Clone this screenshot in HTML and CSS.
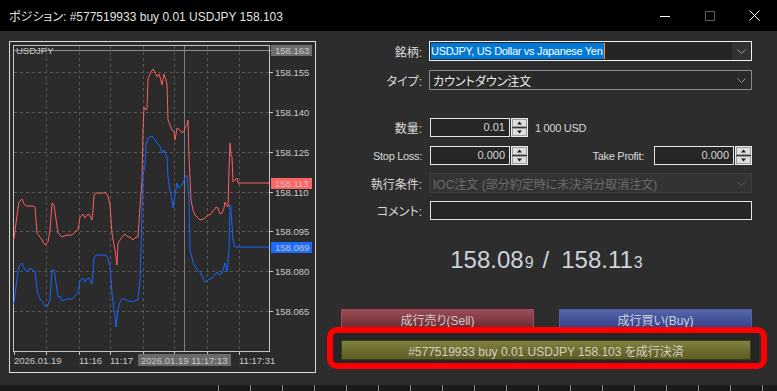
FILE: index.html
```html
<!DOCTYPE html>
<html>
<head>
  <meta charset="utf-8">
  <link rel="stylesheet" href="styles.css">
</head>
<body>

<div class="window">
  <div class="titlebar">
    <span class="title">ポジション: #577519933 buy 0.01 USDJPY 158.103</span>
    <div class="controls">
      <span class="ctl"><svg width="10" height="10" viewBox="0 0 10 10"><line x1="0" y1="5.5" x2="10" y2="5.5" stroke="#fff"/></svg></span>
      <span class="ctl"><svg width="10" height="10" viewBox="0 0 10 10"><rect x="0.5" y="0.5" width="9" height="9" fill="none" stroke="#5a5a5a"/></svg></span>
      <span class="ctl"><svg width="11" height="11" viewBox="0 0 11 11"><path d="M0.5 0.5L10.5 10.5M10.5 0.5L0.5 10.5" stroke="#fff" fill="none"/></svg></span>
    </div>
  </div>

  <div class="main">
    <div class="chart">
      <svg width="307" height="332" viewBox="9 41 307 332">
        <rect x="9.5" y="41.5" width="306" height="331" fill="#2b2b2b" stroke="#dcdcdc"/>

        <!-- grid -->
        <g stroke="#575757" stroke-dasharray="3,3">
          <line x1="14" y1="72.5" x2="269" y2="72.5"/>
          <line x1="14" y1="112.5" x2="269" y2="112.5"/>
          <line x1="14" y1="152.5" x2="269" y2="152.5"/>
          <line x1="14" y1="192.5" x2="269" y2="192.5"/>
          <line x1="14" y1="231.5" x2="269" y2="231.5"/>
          <line x1="14" y1="271.5" x2="269" y2="271.5"/>
          <line x1="14" y1="311.5" x2="269" y2="311.5"/>
          <line x1="46.5" y1="46" x2="46.5" y2="351"/>
          <line x1="79.5" y1="46" x2="79.5" y2="351"/>
          <line x1="110.5" y1="46" x2="110.5" y2="351"/>
          <line x1="143.5" y1="46" x2="143.5" y2="351"/>
          <line x1="174.5" y1="46" x2="174.5" y2="351"/>
          <line x1="207.5" y1="46" x2="207.5" y2="351"/>
          <line x1="239.5" y1="46" x2="239.5" y2="351"/>
        </g>

        <!-- crosshair -->
        <line x1="184.5" y1="46" x2="184.5" y2="351" stroke="#7c7c7c"/>
        <line x1="14" y1="50.5" x2="271" y2="50.5" stroke="#8c8c8c"/>

        <!-- plot frame + ticks -->
        <rect x="13.5" y="45.5" width="256" height="306" fill="none" stroke="#c4c4c4"/>
        <g stroke="#c4c4c4">
          <line x1="270" y1="72.5" x2="273" y2="72.5"/>
          <line x1="270" y1="112.5" x2="273" y2="112.5"/>
          <line x1="270" y1="152.5" x2="273" y2="152.5"/>
          <line x1="270" y1="192.5" x2="273" y2="192.5"/>
          <line x1="270" y1="231.5" x2="273" y2="231.5"/>
          <line x1="270" y1="271.5" x2="273" y2="271.5"/>
          <line x1="270" y1="311.5" x2="273" y2="311.5"/>
          <line x1="14.5" y1="352" x2="14.5" y2="355"/>
          <line x1="46.5" y1="352" x2="46.5" y2="355"/>
          <line x1="79.5" y1="352" x2="79.5" y2="355"/>
          <line x1="110.5" y1="352" x2="110.5" y2="355"/>
          <line x1="143.5" y1="352" x2="143.5" y2="355"/>
          <line x1="174.5" y1="352" x2="174.5" y2="355"/>
          <line x1="207.5" y1="352" x2="207.5" y2="355"/>
          <line x1="239.5" y1="352" x2="239.5" y2="355"/>
        </g>

        <!-- ask / bid -->
        <polyline fill="none" stroke="#ff5e5e" points="13,239 14,239 17,215 19,202 22,199 24,204 26,206 33,206 35,207 37,233 40,237 42,240 45,245 48,242 50,230 52,203 54,205 55,212 58,233 62,237 67,235 72,235 75,232 78,230 80,217 83,214 85,218 87,215 89,214 92,220 93,210 94,195 96,193 106,193 108,196 110,205 112,233 114,245 115,250 117,265 118,243 120,240 122,237 125,234 128,237 130,237 133,240 136,237 138,237 140,207 142,180 143,130 144,107 146,110 147,108 148,79 151,72 153,69 155,72 157,77 159,74 160,77 162,85 164,74 166,80 167,85 168,120 170,125 172,130 174,132 175,140 177,128 180,130 182,133 184,131 185,128 187,125 188,120 189,157 191,200 193,210 195,215 198,218 200,220 203,219 205,218 208,215 210,215 212,212 214,210 216,207 218,208 220,214 222,213 224,208 225,202 227,206 228,207 229,170 230,143 231,155 232,157 233,182 235,180 237,178 238,183 269,183"/>
        <polyline fill="none" stroke="#1466ff" points="13,303 14,303 17,278 19,266 22,263 24,268 27,272 30,268 33,271 35,271 37,290 40,299 42,301 45,306 47,307 50,300 52,270 54,270 55,276 58,297 60,296 62,301 67,299 72,299 75,296 78,292 80,281 83,278 85,282 87,279 89,278 92,284 93,272 94,258 96,255 106,255 108,258 110,267 112,293 114,310 115,315 116,327 118,310 120,302 122,299 125,299 128,301 130,301 133,302 136,300 138,300 140,280 141,250 142,210 143,175 145,165 146,145 148,138 152,136 155,140 157,143 160,146 162,153 164,150 166,155 167,157 168,177 170,190 172,200 173,208 175,195 177,183 179,188 182,185 184,180 186,176 187,175 189,200 190,250 193,262 197,270 200,272 205,282 208,280 212,278 217,272 219,275 222,273 225,263 227,272 229,250 230,205 231,210 233,240 235,247 269,247"/>

        <!-- labels -->
        <g class="axis">
          <text x="16" y="54" fill="#9c9c9c">USDJPY</text>
          <text x="275" y="76">158.155</text>
          <text x="275" y="116">158.140</text>
          <text x="275" y="156">158.125</text>
          <text x="275" y="196">158.110</text>
          <text x="275" y="235">158.095</text>
          <text x="275" y="275">158.080</text>
          <text x="275" y="315">158.065</text>
          <text x="14" y="364">2026.01.19</text>
          <text x="79" y="364">11:16</text>
          <text x="110" y="364">11:17</text>
          <text x="239" y="364">11:17:31</text>
        </g>
        <rect x="271" y="45" width="41" height="11" fill="#6e6e6e"/>
        <rect x="271" y="178" width="41" height="11" fill="#ff6363"/>
        <rect x="271" y="242" width="41" height="11" fill="#1a6bff"/>
        <rect x="138" y="354" width="93" height="12" fill="#6a6a6a"/>
        <g class="axis">
          <text x="275" y="54" fill="#353535">158.163</text>
          <text x="275" y="187" fill="#3a0d0d">158.113</text>
          <text x="275" y="251" fill="#06183f">158.089</text>
          <text x="141" y="364" fill="#353535">2026.01.19 11:17:13</text>
        </g>
      </svg>
    </div>

    <div class="form">
      <div class="row">
        <label>銘柄:</label>
        <div class="combo focus">
          <span class="val"><span class="sel latin">USDJPY, US Dollar vs Japanese Yen</span></span>
          <span class="arrow"><svg width="9" height="5" viewBox="0 0 9 5"><path d="M0.5 0.5L4.5 4.5L8.5 0.5" fill="none" stroke="#9a9a9a"/></svg></span>
        </div>
      </div>

      <div class="row r-type">
        <label>タイプ:</label>
        <div class="combo">
          <span class="val">カウントダウン注文</span>
          <span class="arrow"><svg width="9" height="5" viewBox="0 0 9 5"><path d="M0.5 0.5L4.5 4.5L8.5 0.5" fill="none" stroke="#9a9a9a"/></svg></span>
        </div>
      </div>

      <div class="row r-volume">
        <label>数量:</label>
        <div class="fld">
          <span class="num">0.01</span>
          <svg class="spin" width="17" height="19" viewBox="0 0 17 19"><rect x="0.5" y="0.5" width="16" height="18" fill="#3a3a3a" stroke="#ececec"/><rect x="1.5" y="1.5" width="14" height="7" fill="#dedede" stroke="#9a9a9a"/><rect x="1.5" y="10.5" width="14" height="7" fill="#dedede" stroke="#9a9a9a"/><path d="M6 6.5H11L8.5 3.5Z" fill="#1a1a1a"/><path d="M6 12.5H11L8.5 15.5Z" fill="#1a1a1a"/></svg>
          <span class="unit latin">1 000 USD</span>
        </div>
      </div>

      <div class="row r-sltp">
        <label class="latin">Stop Loss:</label>
        <div class="fld">
          <span class="num">0.000</span>
          <svg class="spin" width="17" height="19" viewBox="0 0 17 19"><rect x="0.5" y="0.5" width="16" height="18" fill="#3a3a3a" stroke="#ececec"/><rect x="1.5" y="1.5" width="14" height="7" fill="#dedede" stroke="#9a9a9a"/><rect x="1.5" y="10.5" width="14" height="7" fill="#dedede" stroke="#9a9a9a"/><path d="M6 6.5H11L8.5 3.5Z" fill="#1a1a1a"/><path d="M6 12.5H11L8.5 15.5Z" fill="#1a1a1a"/></svg>
          <span class="tp-label latin">Take Profit:</span>
          <span class="num">0.000</span>
          <svg class="spin" width="17" height="19" viewBox="0 0 17 19"><rect x="0.5" y="0.5" width="16" height="18" fill="#3a3a3a" stroke="#ececec"/><rect x="1.5" y="1.5" width="14" height="7" fill="#dedede" stroke="#9a9a9a"/><rect x="1.5" y="10.5" width="14" height="7" fill="#dedede" stroke="#9a9a9a"/><path d="M6 6.5H11L8.5 3.5Z" fill="#1a1a1a"/><path d="M6 12.5H11L8.5 15.5Z" fill="#1a1a1a"/></svg>
        </div>
      </div>

      <div class="row r-fill">
        <label>執行条件:</label>
        <div class="combo disabled">
          <span class="val">IOC注文 (部分約定時に未決済分取消注文)</span>
          <span class="arrow"><svg width="9" height="5" viewBox="0 0 9 5"><path d="M0.5 0.5L4.5 4.5L8.5 0.5" fill="none" stroke="#555"/></svg></span>
        </div>
      </div>

      <div class="row r-comment">
        <label>コメント:</label>
        <div class="text-input"></div>
      </div>

      <div class="price">158.08<small>9</small><span class="slash">/</span>158.11<small>3</small></div>

      <div class="btn-group">
        <div class="btn sell">成行売り(Sell)</div>
        <div class="btn buy">成行買い(Buy)</div>
      </div>
      <div class="btn close">#577519933 buy 0.01 USDJPY 158.103 を成行決済</div>
    </div>
  </div>

  <div class="mark"></div>
</div>
<div class="strip"></div>

</body>
</html>
```

FILE: styles.css
```css
body {
  margin: 0;
  background: #1a1a1a;
  font-family: "Liberation Sans", "Noto Sans CJK JP", sans-serif;
  font-feature-settings: "palt";
}

.window {
  position: relative;
  width: 777px;
  height: 385px;
  background: #2d2d2d;
  color: #d6d6d6;
}

.titlebar {
  height: 31px;
  background: #000;
  display: flex;
  align-items: center;
}

.title {
  flex: 1;
  padding-left: 9px;
  font-size: 12px;
  color: #e2e2e2;
}

.controls {
  display: flex;
}

.ctl {
  width: 45px;
  height: 31px;
  display: flex;
  align-items: center;
  justify-content: center;
}

.main {
  display: flex;
  padding-top: 10px;
}

.chart {
  margin-left: 9px;
  width: 307px;
  height: 332px;
}

.chart svg {
  display: block;
}

.axis text {
  font-family: "Liberation Sans", sans-serif;
  font-size: 9.5px;
  fill: #c8c8c8;
}

.form {
  margin-left: 4px;
  width: 432px;
  display: flex;
  flex-direction: column;
  font-size: 12px;
}

.latin {
  font-size: 11px;
  letter-spacing: -0.3px;
}

.row {
  display: grid;
  grid-template-columns: 102px 1fr;
  column-gap: 7px;
  align-items: center;
}

.row label {
  text-align: right;
  color: #d8d8d8;
}

.r-type { margin-top: 9px; }
.r-volume { margin-top: 28px; }
.r-sltp { margin-top: 9px; }
.r-fill { margin-top: 8px; }
.r-comment { margin-top: 8px; }

.combo {
  display: flex;
  height: 20px;
  box-sizing: border-box;
  border: 1px solid #8a8a8a;
  background: #292929;
}

.combo .val {
  flex: 1;
  display: flex;
  align-items: center;
  padding-left: 3px;
  color: #ececec;
  white-space: nowrap;
}

.combo .arrow {
  width: 19px;
  display: flex;
  align-items: center;
  justify-content: center;
}

.combo.focus {
  border-color: #f2f2f2;
  background: #323232;
}

.combo.focus .val {
  padding-left: 1px;
  background: #252525;
}

.sel {
  height: 16px;
  line-height: 16px;
  padding-right: 1px;
  background: #0078d7;
  color: #fff;
  border-right: 1px solid #ff8a2a;
}

.combo.disabled {
  border-color: #3d3d3d;
  background: #333;
}

.combo.disabled .val {
  color: #6c6c6c;
}

.fld {
  display: flex;
  align-items: center;
}

.num {
  width: 80px;
  height: 19px;
  box-sizing: border-box;
  margin-left: 1px;
  padding-right: 4px;
  border: 1px solid #e6e6e6;
  background: #262626;
  color: #d4d4d4;
  font-size: 11px;
  line-height: 17px;
  text-align: right;
}

.spin {
  display: block;
  margin-left: 1px;
}

.unit {
  margin-left: 7px;
  color: #d8d8d8;
}

.tp-label {
  margin-left: auto;
  margin-right: 9px;
  color: #d8d8d8;
}

.text-input {
  height: 19px;
  box-sizing: border-box;
  margin-left: 1px;
  border: 1px solid #e6e6e6;
  background: #262626;
}

.price {
  margin: 26px 0 0 21px;
  font-size: 24px;
  line-height: 28px;
  text-align: center;
  color: #cdd3d9;
}

.price small {
  font-size: 16px;
  margin-left: 1px;
}

.price .slash {
  margin: 0 12px 0 9px;
}

.btn-group {
  display: flex;
  gap: 25px;
  margin: 32px 0 0 21px;
}

.btn {
  height: 20px;
  box-sizing: border-box;
  display: flex;
  align-items: center;
  justify-content: center;
  font-size: 12px;
  white-space: nowrap;
}

.sell {
  width: 193px;
  border: 1px solid #a44753;
  background: linear-gradient(#9a4c55, #6b2b32);
  color: #d2c8c9;
}

.buy {
  width: 193px;
  border: 1px solid #4d5fae;
  background: linear-gradient(#5566aa, #34428a);
  color: #cfd2de;
}

.close {
  margin: 11px 0 0 21px;
  width: 410px;
  border: 1px solid #3c3c1a;
  background: linear-gradient(#80803f, #5c5c24);
  color: #d0d0c0;
  box-shadow: 0 0 0 8px #252525;
}

.mark {
  position: absolute;
  left: 327px;
  top: 327px;
  width: 440px;
  height: 42px;
  box-sizing: border-box;
  border: 6px solid #ff0000;
  border-radius: 10px;
}

.strip {
  height: 6px;
  margin-left: 218px;
  background: repeating-linear-gradient(90deg, #8a8a8a 0 1px, transparent 1px 32px);
}
```
